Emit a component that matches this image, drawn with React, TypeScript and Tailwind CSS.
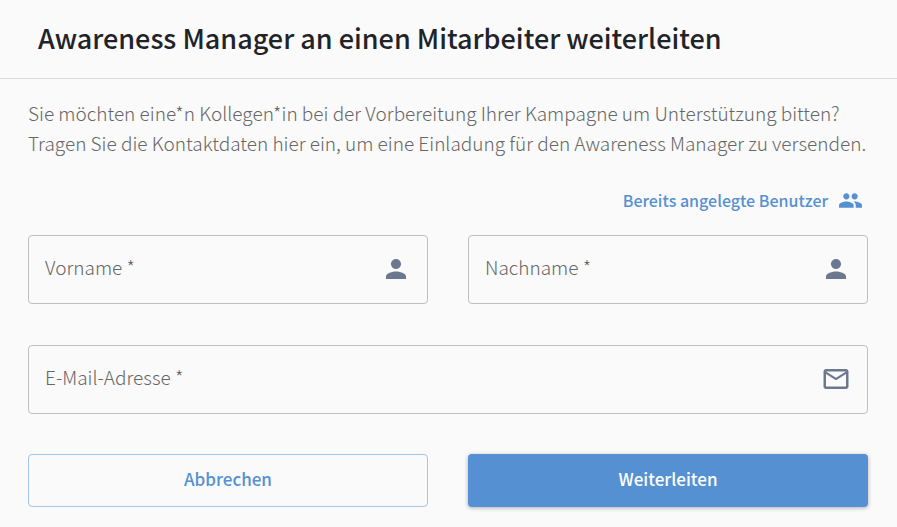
import { useState } from "react";
import { MdMailOutline, MdPeople, MdPerson } from "react-icons/md";
import type { IconType } from "react-icons";

export default function App() {
  const [values, setValues] = useState({
    firstName: "",
    lastName: "",
    email: "",
  });

  function update(name: string, value: string) {
    setValues((prev) => ({ ...prev, [name]: value }));
  }

  return (
    <div
      role="dialog"
      aria-labelledby="forward-title"
      className="min-h-screen bg-[#fafafa] font-['Noto_Sans_CJK_SC',sans-serif]"
    >
      <header className="border-b border-[#dadada] px-[38px] pt-[18px] pb-5">
        <h1
          id="forward-title"
          className="text-[27px] leading-[40px] font-medium text-[#212329]"
        >
          Awareness Manager an einen Mitarbeiter weiterleiten
        </h1>
      </header>

      <form
        onSubmit={(e) => e.preventDefault()}
        className="pt-[19px] pr-[29px] pb-5 pl-7"
      >
        <p className="text-[19px] leading-[30px] font-light text-[#666666]">
          Sie möchten eine*n Kollegen*in bei der Vorbereitung Ihrer Kampagne um
          Unterstützung bitten? Tragen Sie die Kontaktdaten hier ein, um eine
          Einladung für den Awareness Manager zu versenden.
        </p>

        <div className="flex justify-end pt-6 pb-[17px]">
          <button
            type="button"
            className="flex h-9 items-center gap-2.5 pr-[5px] text-base font-medium text-[#5591d2]"
          >
            Bereits angelegte Benutzer
            <MdPeople className="size-[25px]" />
          </button>
        </div>

        <div className="grid grid-cols-2 gap-x-10 gap-y-[41px]">
          <Field
            name="firstName"
            label="Vorname"
            icon={MdPerson}
            value={values.firstName}
            onChange={update}
          />
          <Field
            name="lastName"
            label="Nachname"
            icon={MdPerson}
            value={values.lastName}
            onChange={update}
          />
          <div className="col-span-2">
            <Field
              name="email"
              type="email"
              label="E-Mail-Adresse"
              icon={MdMailOutline}
              value={values.email}
              onChange={update}
            />
          </div>
        </div>

        <div className="mt-10 grid grid-cols-2 gap-x-10">
          <button
            type="button"
            className="h-[53px] rounded border border-[#a3c7ea] pb-1 text-[17px] font-medium text-[#5591d2]"
          >
            Abbrechen
          </button>
          <button
            type="submit"
            className="h-[53px] rounded bg-[#5591d2] pb-1 text-[17px] font-medium text-white shadow-[0_1px_4px_rgba(0,0,0,0.3)]"
          >
            Weiterleiten
          </button>
        </div>
      </form>
    </div>
  );
}

function Field({
  name,
  label,
  type = "text",
  icon: Icon,
  value,
  onChange,
}: {
  name: string;
  label: string;
  type?: string;
  icon: IconType;
  value: string;
  onChange: (name: string, value: string) => void;
}) {
  return (
    <div className="relative flex h-[69px] items-center rounded border border-[#bfbfbf] px-4 pb-0.5 focus-within:border-[#5591d2]">
      <input
        id={name}
        name={name}
        type={type}
        value={value}
        onChange={(e) => onChange(name, e.target.value)}
        placeholder=" "
        required
        className="peer h-full min-w-0 flex-1 bg-transparent text-[19px] font-light text-[#666666] outline-none"
      />
      <label
        htmlFor={name}
        className="pointer-events-none invisible absolute left-4 pb-1 text-[19px] leading-[30px] font-light text-[#666666] peer-placeholder-shown:visible"
      >
        {label} *
      </label>
      <Icon className="size-[30px] text-[#6b7890]" />
    </div>
  );
}
